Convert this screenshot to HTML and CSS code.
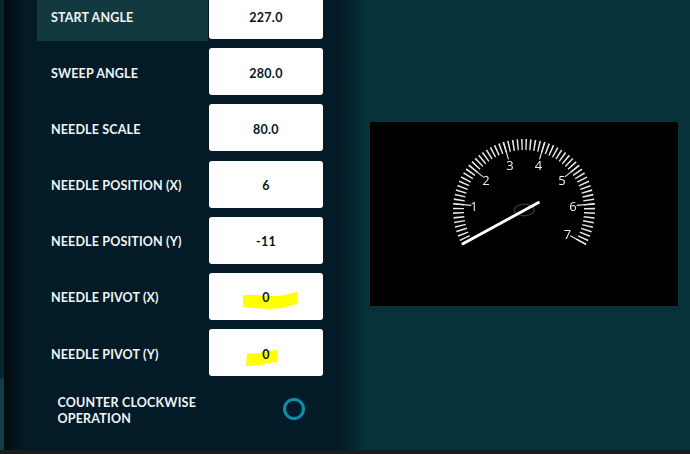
FILE: index.html
```html
<!DOCTYPE html>
<html lang="en">
<head>
<meta charset="utf-8">
<title>Gauge settings</title>
<link rel="stylesheet" href="styles.css">
</head>
<body>
<div class="app">
  <div class="main">
    <div class="rail"></div>
    <aside class="sidebar">
      <div class="fields">
        <div class="row row-active"><div class="label">Start Angle</div><div class="value">227.0</div></div>
        <div class="row"><div class="label">Sweep Angle</div><div class="value">280.0</div></div>
        <div class="row"><div class="label">Needle Scale</div><div class="value">80.0</div></div>
        <div class="row"><div class="label">Needle Position (X)</div><div class="value">6</div></div>
        <div class="row"><div class="label">Needle Position (Y)</div><div class="value">-11</div></div>
        <div class="row"><div class="label">Needle Pivot (X)</div><div class="value"><svg class="mark mark-x" viewBox="0 0 54 18"><path d="M0 3L14 3L20 4L36 4L46 2L54 0L54 12L46 14L40 16L24 17L12 16L0 15Z"/></svg><span class="value-text">0</span></div></div>
        <div class="row"><div class="label">Needle Pivot (Y)</div><div class="value"><svg class="mark mark-y" viewBox="0 0 31 16"><path d="M1 4L14 3L20 1L31 0L31 12L20 13L16 15L0 16Z"/></svg><span class="value-text">0</span></div></div>
      </div>
      <div class="toggle-row">
        <div class="toggle-label">Counter Clockwise Operation</div>
        <div class="radio"></div>
      </div>
    </aside>
    <section class="stage">
      <div class="preview">
        <svg class="gauge" viewBox="-154 -88 308.5 184">
          <path class="minor" pathLength="239.2" d="M-56.96 32.35A65.5 65.5 0 1 1 56.96 32.35"/>
          <g class="major">
            <line y1="-71" y2="-53" transform="rotate(-119)"/>
            <line y1="-71" y2="-53" transform="rotate(-85)"/>
            <line y1="-71" y2="-53" transform="rotate(-51)"/>
            <line y1="-71" y2="-53" transform="rotate(-17)"/>
            <line y1="-71" y2="-53" transform="rotate(17)"/>
            <line y1="-71" y2="-53" transform="rotate(51)"/>
            <line y1="-71" y2="-53" transform="rotate(85)"/>
            <line y1="-71" y2="-53" transform="rotate(119)"/>
          </g>
          <g class="nums">
            <text x="-50" y="-4.5">1</text>
            <text x="-38" y="-30.5">2</text>
            <text x="-14" y="-45.5">3</text>
            <text x="14.5" y="-45.5">4</text>
            <text x="38" y="-30.5">5</text>
            <text x="49" y="-4">6</text>
            <text x="43.5" y="24">7</text>
          </g>
          <ellipse class="pivot" cx="0.3" cy="0" rx="10" ry="5.8"/>
          <line class="needle" x1="-62" y1="34.3" x2="15.5" y2="-8"/>
        </svg>
      </div>
    </section>
  </div>
  <div class="bottom"></div>
</div>
</body>
</html>
```
FILE: styles.css
```css
* { box-sizing: border-box; }
html, body { margin: 0; height: 100%; }
body { overflow: hidden; background: #07323a; font-family: "Lato", "Open Sans", sans-serif; }
.app { display: flex; flex-direction: column; width: 690px; height: 454px; overflow: hidden; }
.main { display: flex; flex: 1; min-height: 0; }
.rail { width: 4px; background: linear-gradient(#07282f 0, #07282f 379px, #0e3e46 379px); }
.sidebar {
  width: 361px;
  background: linear-gradient(90deg, #010a0d 0, #03141a 10px, #031b27 22px, #031b27 335px, #03222c 345px, #07323a 361px);
  padding-left: 33px;
}
.fields { display: flex; flex-direction: column; gap: 7.2px; margin-top: -8px; }
.row { display: flex; height: 49px; width: 286px; }
.label {
  width: 172px;
  padding: 1px 0 0 14px;
  display: flex;
  align-items: center;
  color: #f2f5f5;
  font-size: 12.5px;
  font-weight: 700;
  letter-spacing: 0.15px;
  text-transform: uppercase;
  white-space: nowrap;
  border-radius: 0 0 0 2px;
}
.row-active .label { background: #12393f; }
.value {
  position: relative;
  width: 114.5px;
  margin-left: 0.5px;
  height: 47px;
  padding-top: 3px;
  display: flex;
  align-items: center;
  justify-content: center;
  background: #fff;
  border-radius: 3px;
  color: #07161d;
  font-size: 12.5px;
  font-weight: 700;
  letter-spacing: 0.3px;
}
.value-text { position: relative; }
.mark { position: absolute; fill: #ffff00; }
.mark-x { left: 34px; top: 19px; width: 54px; height: 18px; }
.mark-y { left: 37px; top: 21px; width: 31px; height: 16px; }
.toggle-row { display: flex; align-items: center; margin: 17px 0 0 20.5px; width: 247px; justify-content: space-between; }
.toggle-label {
  width: 170px;
  color: #f2f5f5;
  font-size: 12.5px;
  font-weight: 700;
  line-height: 16px;
  letter-spacing: 0.2px;
  text-transform: uppercase;
}
.radio { width: 22px; height: 22px; margin-bottom: 4px; border: 3.5px solid #0a8fb0; border-radius: 50%; }
.stage { flex: 1; padding: 122px 0 0 4.5px; }
.preview { width: 308.5px; height: 184px; background: #000; }
.gauge { display: block; width: 308.5px; height: 184px; will-change: transform; }
.minor { fill: none; stroke: #e8e8e8; stroke-width: 11; stroke-dasharray: 1.3 2.478; }
.major line { stroke: #eee; stroke-width: 1.1; }
.nums text { fill: #eeeeee; font-family: "Open Sans", sans-serif; font-size: 13px; text-anchor: middle; dominant-baseline: central; }
.pivot { fill: none; stroke: #3a3a3a; stroke-width: 1.2; }
.needle { stroke: #fff; stroke-width: 3; }
.bottom { height: 4px; background: #1c1c1c; }
```
